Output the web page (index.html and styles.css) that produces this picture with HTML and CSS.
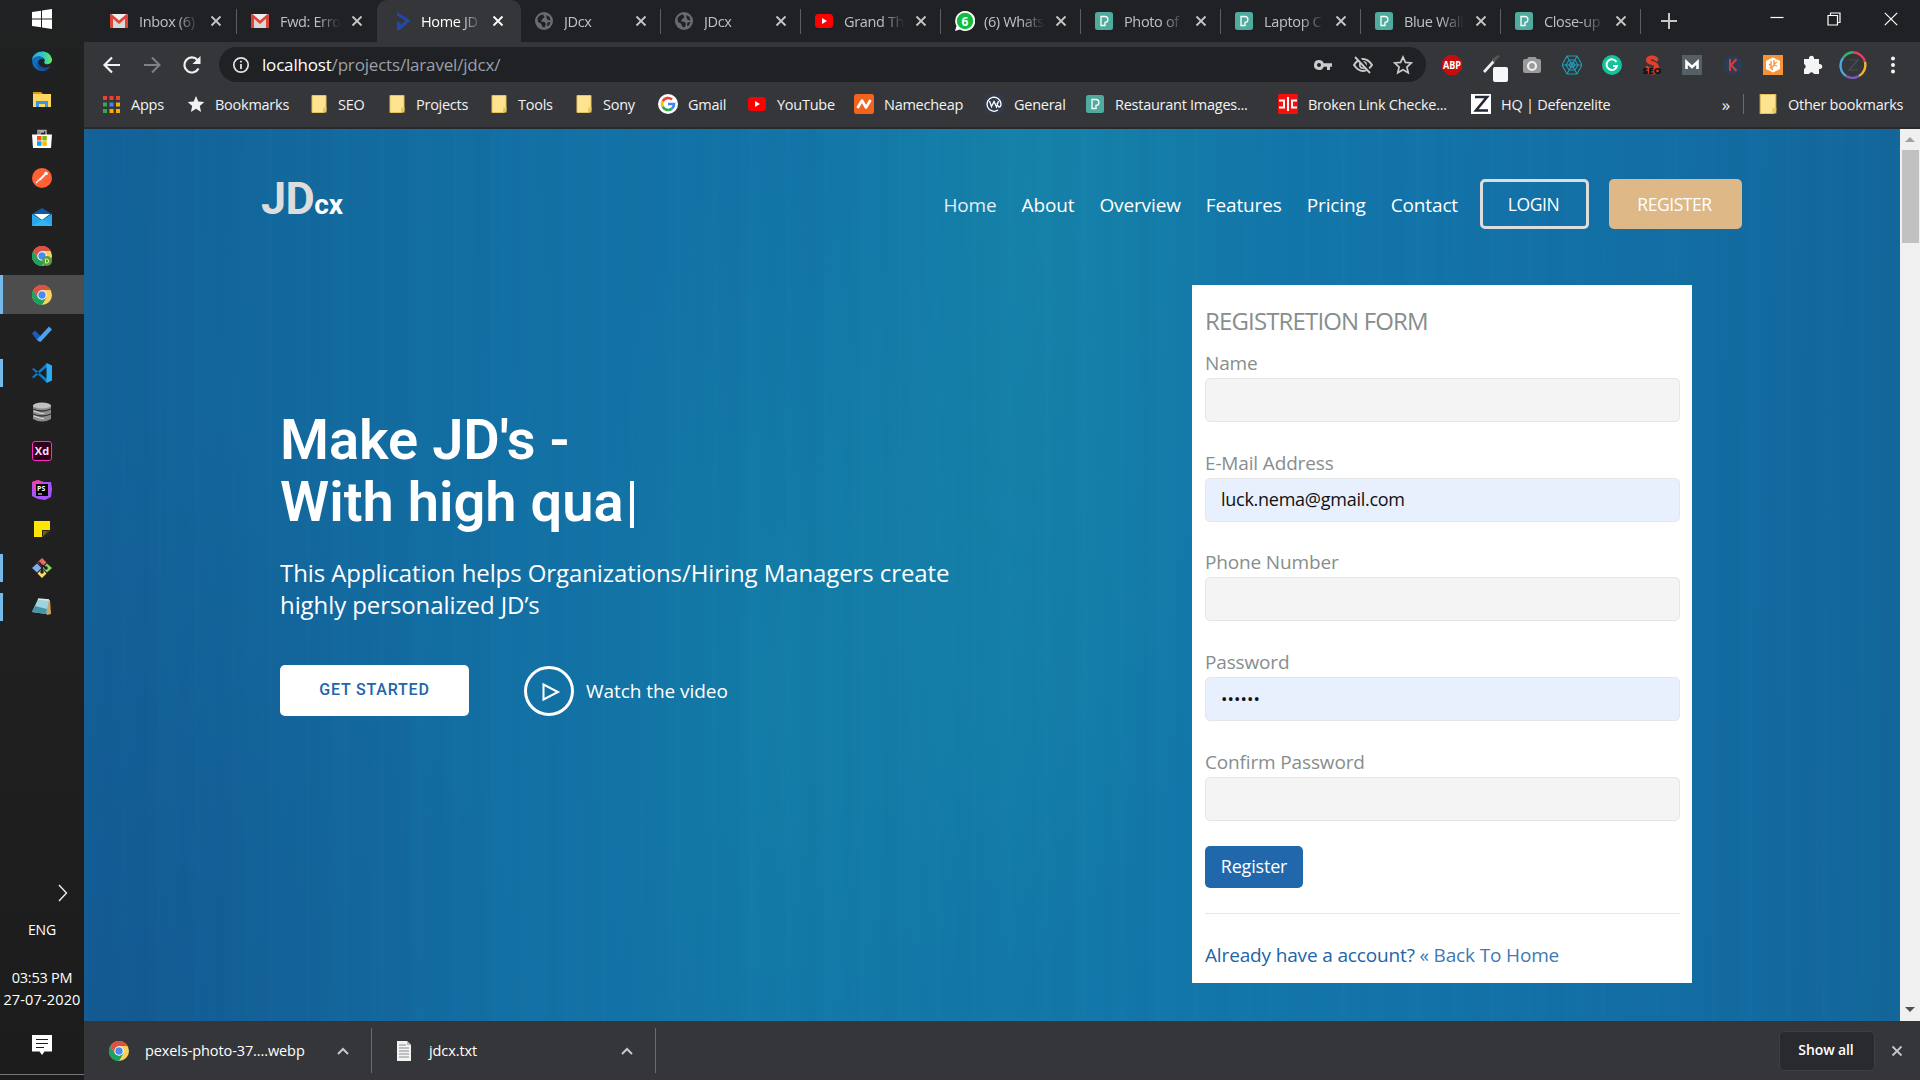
FILE: index.html
```html
<!DOCTYPE html>
<html lang="en">
<head>
<meta charset="utf-8">
<title>Home JDcx</title>
<link rel="stylesheet" href="styles.css">
</head>
<body>
<svg class="defs" aria-hidden="true">
  <symbol id="gmail" viewBox="0 0 18 18"><rect y="2" width="18" height="14" rx="1.5" fill="#eee"/><path d="M3 16V7l6 4 6-4v9z" fill="#d8d8d8"/><path d="M0 3.500Q0 2 1.500 2L9 8.500 16.500 2Q18 2 18 3.500V16h-3V6.800L9 12 3 6.800V16H0z" fill="#dc4437"/></symbol>
  <symbol id="globe" viewBox="0 0 18 18"><circle cx="9" cy="9" r="9" fill="#686b6f"/><path d="M2.500 6.500Q4 3 8 2.500L9.500 5 7 7.500l-1 2 3.500.5 1.500 2-1.500 3.500-2-.5-1.500-3.500-3-1.500zM11.500 3l3 2 1 3.500-2.500-.5-1.500-2zM12.500 10.500l3-.5-1.500 3.500-2 .500z" fill="#202124"/></symbol>
  <symbol id="yt" viewBox="0 0 18 18"><rect y="2" width="18" height="14" rx="3.500" fill="#f00"/><path d="M7 6l5 3-5 3z" fill="#fff"/></symbol>
  <symbol id="pexels" viewBox="0 0 18 18"><rect width="18" height="18" rx="2.500" fill="#4fab9d"/><path d="M6 4.500h4a2.900 2.900 0 0 1 0 5.800V13.500H6z" fill="none" stroke="#fff" stroke-width="1.300"/></symbol>
  <symbol id="cross" viewBox="0 0 12 12"><path d="M1.500 1.500l9 9M10.500 1.500l-9 9" stroke="currentColor" stroke-width="1.800"/></symbol>
  <symbol id="folder" viewBox="0 0 16 18"><path d="M1 .5h14v14l-2 3H1z" fill="#fee391" stroke="#e3c15c"/><path d="M12 17.500v-5h3.500v5z" fill="#ecc85b"/></symbol>
  <symbol id="caret" viewBox="0 0 12 8"><path d="M1 7l5-5 5 5" fill="none" stroke="#c6c8ca" stroke-width="2"/></symbol>
  <symbol id="chrome" viewBox="0 0 20 20"><circle cx="10" cy="10" r="10" fill="#fdd15c"/><path d="M1.300 5A10 10 0 0 1 18.700 5H10l-4.500 7.500z" fill="#de5246"/><path d="M1.300 5A10 10 0 0 0 10 20l4.400-7.500-4.400 2-4.300-2z" fill="#1aa260"/><circle cx="10" cy="10" r="4.700" fill="#fff"/><circle cx="10" cy="10" r="3.700" fill="#4a8af4"/></symbol>
</svg>

<div class="desktop">
  <aside class="taskbar">
    <div class="task start"><svg viewBox="0 0 20 20"><path d="M0 3l9-1.300v7.800H0zM10 1.500L20 0v9.500H10zM0 10.500h9v7.800L0 17zM10 10.500h10V20l-10-1.500z" fill="#fff"/></svg></div>
    <div class="task"><svg viewBox="0 0 20 20"><defs><linearGradient id="eg" x1="0" x2="1"><stop offset="0" stop-color="#2ba8e0"/><stop offset=".5" stop-color="#2cc3d3"/><stop offset="1" stop-color="#66eb56"/></linearGradient></defs><path d="M0 9C1-1 17-3 20 8c.5 4-3 6-6.500 5-3-1 0-2-1-4.500C10 4 3 5 0 9z" fill="url(#eg)"/><path d="M0 9c2-4 9-5 12-1-4-1-6 1-6 4 0 4 4 8 9 7-7 3-15-1-15-10z" fill="#0f6ec0"/><path d="M6.500 10c-1 5 5 9 12 5-2 4-7 6-10 4-4-2-5-6-2-9z" fill="#154f9b"/></svg></div>
    <div class="task"><svg viewBox="0 0 20 20"><path d="M1 2h8l2 2h-10z" fill="#dc9812"/><path d="M1 4h18v13H1z" fill="#ffd65f"/><path d="M4 17v-6h12v6h-3v-3H7v3z" fill="#3b96e0"/></svg></div>
    <div class="task"><svg viewBox="0 0 20 20"><path d="M6 6V1.500h8V6M8 6V3h4" fill="none" stroke="#aaa" stroke-width="1.500"/><path d="M0 5.500h20L19 19H1z" fill="#fff"/><path d="M5 7h4.500v4.500H5z" fill="#f25022"/><path d="M10.300 7h4.500v4.500h-4.500z" fill="#7fba00"/><path d="M5 12.300h4.500v4.500H5z" fill="#00a4ef"/><path d="M10.300 12.300h4.500v4.500h-4.500z" fill="#ffb900"/></svg></div>
    <div class="task"><svg viewBox="0 0 20 20"><circle cx="10" cy="10" r="10" fill="#ff6036"/><path d="M4 15l5-5 4-4M8 12l5-5" stroke="#fff" stroke-width="1.300"/><circle cx="14" cy="5.500" r="1.800" fill="#fff"/></svg></div>
    <div class="task"><svg viewBox="0 0 20 20"><path d="M0 7l10-6 10 6v5H0z" fill="#0c59a4"/><path d="M2 7h16l-8 6z" fill="#fff"/><path d="M0 7l10 6.500L20 7v12H0z" fill="#28a8ea"/><path d="M0 19l11-6.500 9 6.500z" fill="#35b4f2"/></svg></div>
    <div class="task"><svg viewBox="0 0 20 20"><use href="#chrome"/><circle cx="15" cy="15" r="5" fill="#5b9f3a"/><path d="M13.500 13v4h1.200a2 2 0 0 0 0-4z" fill="none" stroke="#d4eac8"/></svg></div>
    <div class="task active open"><svg viewBox="0 0 20 20"><use href="#chrome"/></svg></div>
    <div class="task"><svg viewBox="0 0 20 20"><path d="M0 9.500l3-3L8.500 12l-3 5z" fill="#185abd"/><path d="M5 15.500L17 2.500l3 3L9 17.500q-2 1-4-2z" fill="#4ba2ee"/></svg></div>
    <div class="task open"><svg viewBox="0 0 20 20"><path d="M0 6l1.500-1L15 16v4zM0 14l1.500 1.200L15 4V0z" fill="#0a7fd0"/><path d="M14.500 0L20 2.500v15L14.500 20z" fill="#2cabf0"/></svg></div>
    <div class="task"><svg viewBox="0 0 20 20"><path d="M1 3h18v14q-9 5-18 0z" fill="#8c8c8c"/><ellipse cx="10" cy="3.500" rx="9" ry="3" fill="#c0c0c0"/><path d="M1 7q9 4 18 0M1 12q9 4 18 0" fill="none" stroke="#333" stroke-width="1.300"/><path d="M2 9q7 3 10 2.500M2 14q7 3 10 2.500" fill="none" stroke="#ddd"/></svg></div>
    <div class="task"><span class="xd">Xd</span></div>
    <div class="task"><svg viewBox="0 0 20 20"><path d="M0 2l6-2 6 2 7 0 1 7-1 8-6 3-7-1-6-3z" fill="#a855f7"/><path d="M0 2l6-2 5 3-8 10z" fill="#f43fa8"/><path d="M4 4h12v12H4z" fill="#000"/><path d="M6 14h4" stroke="#fff"/><text x="5" y="10.500" class="ps">PS</text></svg></div>
    <div class="task"><svg viewBox="0 0 20 20"><path d="M2 2h16v16H2z" fill="#ffe500"/><path d="M10 18v-7h8z" fill="#242424"/><path d="M10 18h8v-7z" fill="#242424"/><path d="M11 12h5l-5 5z" fill="#6e6400"/></svg></div>
    <div class="task open"><svg viewBox="0 0 20 20"><path d="M10 0l4.500 4.500L10 9 5.500 4.500z" fill="#ef6868"/><path d="M5 5.500L9.500 10 5 14.500 0 10z" fill="#80aef0"/><path d="M15 5.500l5 4.500-5 4.500-4.500-4.500z" fill="#8bd65f"/><path d="M10 11l4.500 4.500L10 20l-4.500-4.500z" fill="#ffdc68"/><path d="M7 4l3 4v7M10 7l4 3" fill="none" stroke="#222" stroke-width="1.800"/><circle cx="10" cy="14" r="1.800" fill="#222"/><circle cx="14" cy="10" r="1.800" fill="#222"/></svg></div>
    <div class="task open"><svg viewBox="0 0 20 20"><path d="M6 2l12 1 1 14-4 1z" fill="#c9a66a"/><path d="M6 2l11 1-3 14-14-2z" fill="#9fd3df"/><path d="M0 15l3-6 12 3-1 5z" fill="#4696a8"/><path d="M6 2l11 1" stroke="#e8e8e8" stroke-width="1.500"/></svg></div>
    <div class="tray">
      <svg class="tray-chevron" viewBox="0 0 10 18"><path d="M1 1l7.500 8L1 17" fill="none" stroke="#eee" stroke-width="1.400"/></svg>
      <span class="lang">ENG</span>
      <span class="time">03:53 PM</span>
      <span class="date">27-07-2020</span>
      <svg class="action" viewBox="0 0 20 20"><path d="M0 0h20v16.500h-7.500L10 20l-2.500-3.500H0z" fill="#fff"/><path d="M4 4.500h12M4 8.500h12M4 12.500h8" stroke="#1d1d1d" stroke-width="1.200"/></svg>
    </div>
  </aside>

  <main class="browser">
    <div class="tabs">
      <div class="tab"><svg class="fav"><use href="#gmail"/></svg><span>Inbox (6)</span><svg class="x"><use href="#cross"/></svg></div>
      <div class="tab nosep"><svg class="fav"><use href="#gmail"/></svg><span>Fwd: Erro</span><svg class="x"><use href="#cross"/></svg></div>
      <div class="tab current"><svg class="fav" viewBox="0 0 18 18"><path d="M3 0l13.500 8.500L6 18H3V9l3.500 2v2l5-4.500L3 3.500z" fill="#2347ad"/></svg><span>Home JD</span><svg class="x"><use href="#cross"/></svg></div>
      <div class="tab"><svg class="fav"><use href="#globe"/></svg><span>JDcx</span><svg class="x"><use href="#cross"/></svg></div>
      <div class="tab"><svg class="fav"><use href="#globe"/></svg><span>JDcx</span><svg class="x"><use href="#cross"/></svg></div>
      <div class="tab"><svg class="fav"><use href="#yt"/></svg><span>Grand Th</span><svg class="x"><use href="#cross"/></svg></div>
      <div class="tab"><svg class="fav big" viewBox="0 0 20 20"><path d="M10 0a10 10 0 1 1-5 18.500L0 20l1.500-5A10 10 0 0 1 10 0z" fill="#fff"/><circle cx="10" cy="10" r="8.200" fill="#12bd3c"/><text x="6.600" y="14.500" class="wa">6</text></svg><span>(6) Whats</span><svg class="x"><use href="#cross"/></svg></div>
      <div class="tab"><svg class="fav"><use href="#pexels"/></svg><span>Photo of</span><svg class="x"><use href="#cross"/></svg></div>
      <div class="tab"><svg class="fav"><use href="#pexels"/></svg><span>Laptop C</span><svg class="x"><use href="#cross"/></svg></div>
      <div class="tab"><svg class="fav"><use href="#pexels"/></svg><span>Blue Wall</span><svg class="x"><use href="#cross"/></svg></div>
      <div class="tab"><svg class="fav"><use href="#pexels"/></svg><span>Close-up</span><svg class="x"><use href="#cross"/></svg></div>
      <svg class="plus" viewBox="0 0 16 16"><path d="M8 0v16M0 8h16" stroke="#c4c6c8" stroke-width="2"/></svg>
      <div class="window-controls">
        <svg viewBox="0 0 14 14"><path d="M.5 5.500h13" stroke="#fff" stroke-width="1.200"/></svg>
        <svg viewBox="0 0 14 14"><path d="M1 3.500h9.500V13H1zM3.500 3.500V1H13v9.500h-2.500" fill="none" stroke="#fff" stroke-width="1.200"/></svg>
        <svg viewBox="0 0 14 14"><path d="M.8.800l12.400 12.400M13.200.8L.8 13.200" stroke="#fff" stroke-width="1.200"/></svg>
      </div>
    </div>

    <div class="toolbar">
      <svg class="nav-icon" viewBox="0 0 20 20"><path d="M18 10H3M10 2.500L2.500 10l7.500 7.500" fill="none" stroke="#f1f1f1" stroke-width="2.200"/></svg>
      <svg class="nav-icon" viewBox="0 0 20 20"><path d="M2 10h15M10 2.500l7.500 7.500-7.500 7.500" fill="none" stroke="#808184" stroke-width="2"/></svg>
      <svg class="nav-icon" viewBox="0 0 20 20"><path d="M16.500 13.500A7.500 7.500 0 1 1 15.500 5" fill="none" stroke="#f1f1f1" stroke-width="2.200"/><path d="M18.500 1v8h-8z" fill="#f1f1f1"/></svg>
      <div class="omnibox">
        <svg class="info" viewBox="0 0 18 18"><circle cx="9" cy="9" r="7.200" fill="none" stroke="#e3e3e3" stroke-width="1.700"/><path d="M9 8v5M9 4.700v1.800" stroke="#e3e3e3" stroke-width="1.800"/></svg>
        <span class="url"><b>localhost</b>/projects/laravel/jdcx/</span>
        <div class="omni-icons">
          <svg viewBox="0 0 20 20"><path d="M6 5a5 5 0 1 0 4.700 6.700H14V15h3v-3.300h2V8.300h-8.300A5 5 0 0 0 6 5zm0 3a2 2 0 1 1 0 4 2 2 0 0 1 0-4z" fill="#c9cacb"/></svg>
          <svg viewBox="0 0 20 20"><path d="M1 10q4-6 9-6t9 6q-4 6-9 6t-9-6z" fill="none" stroke="#c9cacb" stroke-width="2"/><circle cx="10" cy="10" r="3.200" fill="none" stroke="#c9cacb" stroke-width="1.600"/><path d="M4 1l14 17" stroke="#202124" stroke-width="3"/><path d="M2 2l15 16" stroke="#c9cacb" stroke-width="1.900"/></svg>
          <svg viewBox="0 0 20 20"><path d="M10 2l2.400 5.400 5.900.6-4.400 4 1.300 5.800L10 14.800l-5.200 3L6.100 12 1.700 8l5.900-.6z" fill="none" stroke="#c9cacb" stroke-width="1.700"/></svg>
        </div>
      </div>
      <div class="extensions">
        <svg viewBox="0 0 20 20"><path d="M6 0h8l6 6v8l-6 6H6l-6-6V6z" fill="#c70d0d"/><text x="1" y="13.800" textLength="18" lengthAdjust="spacingAndGlyphs" class="abp">ABP</text></svg>
        <svg class="over" viewBox="0 0 20 20"><path d="M1 16L11 5l2 2L3 18z" fill="#eee"/><path d="M10 4l2 4 6-7-2-1z" fill="#555"/><rect x="11" y="12" width="15" height="15" rx="2" fill="#f6f7fb"/></svg>
        <svg viewBox="0 0 20 20"><path d="M1 6q0-2 2-2h2l1.500-2h7L15 4h2q2 0 2 2v10q0 2-2 2H3q-2 0-2-2z" fill="#9a9a9a"/><circle cx="10" cy="11" r="4" fill="none" stroke="#eee" stroke-width="2.200"/></svg>
        <svg viewBox="0 0 20 20"><path d="M5 1h10l5 9-5 9H5l-5-9zM7 5h6l3 5-3 5H7l-3-5zM8.500 7.500h3L13 10l-1.500 2.500h-3L7 10zM5 1l10 18M15 1L5 19M0 10h20" fill="none" stroke="#1f9bb3" stroke-width="1.100"/></svg>
        <svg viewBox="0 0 20 20"><circle cx="10" cy="10" r="10" fill="#15c39a"/><path d="M14.500 7A5.300 5.300 0 1 0 15 11h-4" fill="none" stroke="#fff" stroke-width="1.900"/></svg>
        <svg viewBox="0 0 20 20"><path d="M16.500 4Q14-.200 9 .500 3.500 1.500 4 5.500 4.500 9 10 10q2.500.5 2 2-1 1.500-4 .5l-4-2V17q6 4.500 11.500 1 3-3 1-8Q15 7 10.500 6q-2-.5-1.500-1.500 1.500-1 6 2.500z" fill="#e0402c"/><text x=".5" y="18.500" textLength="19" lengthAdjust="spacingAndGlyphs" class="seo">SEO</text></svg>
        <svg viewBox="0 0 20 20"><path d="M0 0h20v20H0z" fill="#556064"/><path d="M4.500 14V7l5.500 5 5.500-5v7" fill="none" stroke="#fff" stroke-width="2.600"/></svg>
        <svg viewBox="0 0 20 20"><circle cx="10" cy="10" r="10" fill="#2c3c52"/><path d="M7 4v12M13.500 4L8 10l5.500 6" fill="none" stroke="#cf3e42" stroke-width="2"/></svg>
        <svg viewBox="0 0 20 20"><path d="M0 0h20v20H0z" fill="#f79337"/><path d="M10 2.500l7 3.500v8l-7 3.500L3 14V6z" fill="#fff"/><path d="M8 6v5l-2-2M11 5v4l3-2M8 14l3-4 3 1M7 12l3 3" fill="none" stroke="#f79337" stroke-width="1.300"/></svg>
        <svg viewBox="0 0 20 20"><path d="M1 4h5a2.600 2.600 0 1 1 5 0h5v5a2.600 2.600 0 1 1 0 5v5h-5a2.700 2.700 0 0 0-5 0H1v-5a2.700 2.700 0 0 0 0-5z" fill="#f4f4f4"/></svg>
        <svg class="avatar" viewBox="0 0 28 28"><g fill="none" stroke-width="2.400"><path d="M4 7A13 13 0 0 1 14 1.300" stroke="#2fb573"/><path d="M14 1.300A12.700 12.700 0 0 1 26 11" stroke="#ef3b63"/><path d="M26 11a12.700 12.700 0 0 1-6 14" stroke="#f4b52d"/><path d="M20 25a12.700 12.700 0 0 1-13 0" stroke="#7b5db3"/><path d="M7 25A12.700 12.700 0 0 1 4 7" stroke="#49a8dd"/></g><path d="M10 9h9l-9 10h9" fill="none" stroke="#4b4d51" stroke-width="1.200"/></svg>
        <svg viewBox="0 0 20 20"><g fill="#f4f4f4"><circle cx="10" cy="3.500" r="2"/><circle cx="10" cy="10" r="2"/><circle cx="10" cy="16.500" r="2"/></g></svg>
      </div>
    </div>

    <nav class="bookmarks">
      <a><svg viewBox="0 0 18 18"><path d="M0 1h4v4H0zM6.500 1h4v4h-4zM13 1h4v4h-4z" fill="#e94235"/><path d="M0 7.500h4v4H0z" fill="#34a853"/><path d="M6.500 7.500h4v4h-4z" fill="#4285f4"/><path d="M13 7.500h4v4h-4zM6.500 14h4v4h-4zM13 14h4v4h-4z" fill="#fbab05"/><path d="M0 14h4v4H0z" fill="#34a853"/></svg>Apps</a>
      <a><svg viewBox="0 0 18 18"><path d="M9 1l2.300 5.500 6 .5-4.500 4 1.300 6L9 13.800 3.900 17l1.300-6L.7 7l6-.5z" fill="#f1f3f4"/></svg>Bookmarks</a>
      <a><svg><use href="#folder"/></svg>SEO</a>
      <a><svg><use href="#folder"/></svg>Projects</a>
      <a><svg><use href="#folder"/></svg>Tools</a>
      <a><svg><use href="#folder"/></svg>Sony</a>
      <a><svg viewBox="0 0 20 20"><circle cx="10" cy="10" r="10" fill="#fff"/><g fill="none" stroke-width="2.700"><path d="M14 5.500A6 6 0 0 0 4.700 7.300" stroke="#ea4335"/><path d="M4.700 7.300a6 6 0 0 0 0 5.400" stroke="#fbbc05"/><path d="M4.700 12.700A6 6 0 0 0 14 14.500" stroke="#34a853"/><path d="M14 14.500A6 6 0 0 0 16 10h-6" stroke="#4285f4"/></g></svg>Gmail</a>
      <a><svg><use href="#yt"/></svg>YouTube</a>
      <a><svg viewBox="0 0 20 20"><rect width="20" height="20" rx="2.500" fill="#f0641e"/><path d="M3.500 14L8 6.500l4 7L16.500 6" fill="none" stroke="#fff" stroke-width="2.600" stroke-linejoin="round"/></svg>Namecheap</a>
      <a><svg viewBox="0 0 20 20"><rect width="20" height="20" rx="4" fill="#303a4b"/><path d="M14 16a7 7 0 1 1 3-6q0 3-2 3-1 0-2-4M5.500 7l2 5.500 2.500-5 2.500 5.500L14.500 7" fill="none" stroke="#fff" stroke-width="1.300"/></svg>General</a>
      <a><svg><use href="#pexels"/></svg>Restaurant Images...</a>
      <a><svg viewBox="0 0 20 20"><rect width="20" height="20" rx="1.500" fill="#f60d0d"/><path d="M1 6.500h5v7H1M10 3v14M19 6.500h-5v7h5" fill="none" stroke="#fff" stroke-width="2"/></svg>Broken Link Checke...</a>
      <a><svg viewBox="0 0 20 20"><path d="M0 0h20v20H0z" fill="#fff"/><path d="M4 3h12L5 16.500h12" fill="none" stroke="#222831" stroke-width="2.600"/></svg>HQ | Defenzelite</a>
      <span class="more">»</span>
      <a class="other"><svg><use href="#folder"/></svg>Other bookmarks</a>
    </nav>

    <div class="viewport">
      <div class="page">
        <header class="site-header">
          <div class="logo">JD<small>cx</small></div>
          <nav class="site-nav">
            <a class="on">Home</a><a>About</a><a>Overview</a><a>Features</a><a>Pricing</a><a>Contact</a>
            <a class="btn login">LOGIN</a><a class="btn register">REGISTER</a>
          </nav>
        </header>
        <div class="hero">
          <section class="pitch">
            <h1>Make JD's -<br><span>With high qua</span><i class="cursor"></i></h1>
            <p>This Application helps Organizations/Hiring Managers create<br>highly personalized JD’s</p>
            <div class="actions">
              <a class="get-started">GET STARTED</a>
              <a class="watch"><svg viewBox="0 0 50 50"><circle cx="25" cy="25" r="23.500" fill="none" stroke="#fff" stroke-width="3"/><path d="M19.500 18.500L34 26l-14.500 7.500z" fill="none" stroke="#fff" stroke-width="2"/></svg><span>Watch the video</span></a>
            </div>
          </section>
          <form class="card">
            <h2>REGISTRETION FORM</h2>
            <label><span>Name</span><i class="field"></i></label>
            <label><span>E-Mail Address</span><i class="field filled"><b>luck.nema@gmail.com</b></i></label>
            <label><span>Phone Number</span><i class="field"></i></label>
            <label><span>Password</span><i class="field filled"><b class="dots">••••••</b></i></label>
            <label><span>Confirm Password</span><i class="field"></i></label>
            <a class="submit">Register</a>
            <hr>
            <p class="links"><b>Already have a account?</b> « Back To Home</p>
          </form>
        </div>
      </div>
      <div class="scrollbar">
        <svg viewBox="0 0 20 20"><path d="M5 13l5-5 5 5z" fill="#a0a0a0"/></svg>
        <div class="thumb"></div>
        <svg class="down" viewBox="0 0 20 20"><path d="M5 6l5 5 5-5z" fill="#505050"/></svg>
      </div>
    </div>

    <footer class="downloads">
      <div class="download"><svg class="file"><use href="#chrome"/></svg><span>pexels-photo-37....webp</span><svg class="caret"><use href="#caret"/></svg></div>
      <div class="download"><svg class="file" viewBox="0 0 20 20"><path d="M3 0h10l4 4v16H3z" fill="#f3f3f3"/><path d="M5 4h7M5 7h10M5 10h10M5 13h10M5 16h10" stroke="#8b8b8b"/><path d="M13 0v4h4" fill="#bbb"/></svg><span>jdcx.txt</span><svg class="caret"><use href="#caret"/></svg></div>
      <span class="show-all">Show all</span>
      <svg class="x"><use href="#cross"/></svg>
    </footer>
  </main>
</div>
</body>
</html>
```
FILE: styles.css
```css
* { box-sizing: border-box; }
body { margin: 0; overflow: hidden; font-family: "Open Sans", "Noto Sans", sans-serif; }
a { text-decoration: none; }
.defs { display: none; }
svg { flex: none; display: block; }
.desktop { display: flex; width: 1920px; height: 1080px; }

/* Taskbar */
.taskbar { display: flex; flex-direction: column; width: 84px; height: 1080px; background: linear-gradient(#202122, #202020 60%, #1c1c1c); color: #fff; }
.task { display: flex; flex: none; align-items: center; justify-content: center; height: 39px; }
.task svg { width: 20px; height: 20px; }
.task.start { height: 38px; margin-bottom: 3px; }
.task.active { background: #4d4d4d; }
.task.open { background-image: linear-gradient(#76b9ed, #76b9ed); background-repeat: no-repeat; background-size: 3px 28px; background-position: 0 center; }
.task.active.open { background-size: 3px 100%; }
.xd { width: 20px; height: 20px; border: 1.500px solid #ff2bc2; border-radius: 3px; background: #2e001e; color: #ffd9f4; font: 700 11px/17px "Open Sans", sans-serif; text-align: center; }
.ps { font: 700 7px "Open Sans", sans-serif; fill: #fff; }
.tray { display: flex; flex: 1; flex-direction: column; align-items: center; margin-bottom: 5px; border-bottom: 1.500px solid #777; font-size: 14px; line-height: 22px; white-space: nowrap; }
.tray-chevron { width: 10px; height: 18px; margin: auto 16px 17px auto; }
.lang { margin-bottom: 26px; letter-spacing: -.1px; }
.time { font-size: 14.500px; letter-spacing: -.25px; }
.date { font-size: 14.500px; letter-spacing: .15px; }
.action { width: 20px; height: 20px; margin: 24px 0 19px; }

/* Browser frame */
.browser { display: flex; flex: 1; flex-direction: column; min-width: 0; }
.tabs { display: flex; flex: none; height: 42px; padding-left: 12px; background: #202124; color: #bdc1c6; }
.tab { position: relative; display: flex; flex: none; align-items: center; width: 140px; padding: 0 14px; font-size: 14.500px; letter-spacing: -.35px; }
.tab:first-child { width: 141px; }
.tab::after { content: ""; position: absolute; right: 0; top: 9px; width: 1px; height: 25px; background: #5c5e62; }
.tab.nosep::after, .tab.current::after { display: none; }
.fav { width: 18px; height: 18px; margin-right: 11px; }
.fav.big { width: 20px; height: 20px; margin-right: 9px; }
.wa { font: 700 12px "Open Sans", sans-serif; fill: #fff; }
.tab span { width: 62px; white-space: nowrap; -webkit-mask-image: linear-gradient(90deg, #000 60%, transparent 98%); mask-image: linear-gradient(90deg, #000 60%, transparent 98%); }
.x { width: 12px; height: 12px; color: #c4c6c8; }
.tab .x { margin-left: 9px; }
.tab.current { width: 144px; padding-left: 17px; border-radius: 10px 10px 0 0; background: #35363a; color: #fff; }
.tab.current .fav { margin-right: 9px; }
.tab.current .x { color: #fff; }
.plus { width: 16px; height: 16px; margin: 13px 0 0 20px; }
.window-controls { display: flex; gap: 43px; margin: 12px 22px 0 auto; }
.window-controls svg { width: 14px; height: 14px; }

.toolbar { display: flex; flex: none; align-items: center; height: 45px; padding-left: 18px; background: #35363a; }
.nav-icon { width: 20px; height: 20px; margin-right: 20px; }
.omnibox { display: flex; flex: none; align-items: center; width: 1207px; height: 35px; margin-left: -3px; padding: 0 13px; border-radius: 18px; background: #202124; }
.info { width: 18px; height: 18px; margin-right: 12px; }
.url { color: #9aa0a6; font-size: 17px; letter-spacing: -.18px; }
.url b { color: #fff; font-weight: 400; }
.omni-icons { display: flex; gap: 20px; margin-left: auto; }
.omni-icons svg, .extensions svg { width: 20px; height: 20px; }
.extensions { display: flex; align-items: center; justify-content: space-between; width: 461px; margin-left: 16px; }
.extensions .over { overflow: visible; }
.extensions .avatar { width: 28px; height: 28px; margin: 0 -4px; }
.abp { font: 700 10.500px "Open Sans", sans-serif; fill: #fff; }
.seo { font: 800 9px "Open Sans", sans-serif; fill: #111; }

.bookmarks { display: flex; flex: none; align-items: center; height: 42px; padding: 0 0 6px 19px; border-bottom: 2px solid #28292c; background: #35363a; color: #f1f3f4; font-size: 14.500px; letter-spacing: -.26px; white-space: nowrap; }
.bookmarks a { display: flex; flex: none; align-items: center; }
.bookmarks svg { width: 18px; height: 18px; margin-right: 10px; }
.bookmarks a:nth-child(1) { width: 84px; }
.bookmarks a:nth-child(2) { width: 123px; }
.bookmarks a:nth-child(3) { width: 78px; }
.bookmarks a:nth-child(4) { width: 102px; }
.bookmarks a:nth-child(5) { width: 85px; }
.bookmarks a:nth-child(6) { width: 83px; }
.bookmarks a:nth-child(7) { width: 90px; }
.bookmarks a:nth-child(8) { width: 106px; }
.bookmarks a:nth-child(9) { width: 130px; }
.bookmarks a:nth-child(10) { width: 102px; }
.bookmarks a:nth-child(11) { width: 192px; }
.bookmarks a:nth-child(12) { width: 193px; }
.bookmarks a:nth-child(n+7) svg { width: 20px; height: 20px; }
.bookmarks a:nth-child(8) svg, .bookmarks a:nth-child(11) svg { width: 18px; height: 18px; margin-right: 11px; }
.bookmarks .more { margin-left: auto; margin-right: 13px; font-size: 17px; }
.bookmarks .other { width: 177px; height: 20px; padding-left: 14px; border-left: 1px solid #6a6b6e; }
.bookmarks .other svg { width: 18px; height: 18px; }

/* Page */
.viewport { display: flex; flex: none; height: 892px; }
.page {
  flex: 1;
  background:
    repeating-linear-gradient(90deg, rgba(255,255,255,.009) 0 2px, transparent 6px 19px, rgba(0,20,60,.012) 23px 25px, transparent 31px 37px),
    repeating-linear-gradient(90.300deg, rgba(60,160,190,.014) 0 9px, transparent 22px 49px, rgba(0,20,80,.012) 62px 66px, transparent 83px),
    radial-gradient(ellipse 240px 760px at 950px 60px, rgba(24,140,168,.55), transparent),
    radial-gradient(ellipse 200px 560px at 700px 560px, rgba(20,135,165,.42), transparent),
    radial-gradient(ellipse 240px 420px at 900px 560px, rgba(20,135,165,.3), transparent),
    radial-gradient(ellipse 420px 620px at 20px 892px, rgba(20,80,140,.5), transparent),
    linear-gradient(92deg, #126198 0, #12699e 12%, #1271a5 26%, #1275a8 40%, #1277a9 56%, #1276aa 66%, #1271a7 80%, #126ba1 91%, #12669a 100%);
}
.site-header { display: flex; align-items: flex-start; justify-content: space-between; padding: 50px 158px 0 177px; }
.logo { color: #ddd; font: 700 45px/39px Roboto, sans-serif; letter-spacing: -.6px; white-space: nowrap; }
.logo small { color: #fff; font-size: 28px; letter-spacing: 0; }
.site-nav { display: flex; align-items: center; height: 50px; color: #fff; font-size: 19px; font-weight: 500; letter-spacing: -.13px; }
.site-nav a { margin-right: 25px; padding-top: 1px; }
.site-nav .on { color: #e2eef4; }
.site-nav .btn { display: flex; align-items: center; justify-content: center; height: 50px; padding: 0 2px 0 0; border-radius: 5px; font-size: 17.500px; letter-spacing: -.45px; }
.site-nav .login { width: 109px; margin-right: 20px; margin-left: -3px; border: 3px solid #ddd; }
.site-nav .register { width: 133px; margin: 0; background: #deb887; }
.hero { display: flex; align-items: flex-start; justify-content: space-between; padding: 56px 208px 0 196px; color: #fff; }
.pitch { padding-top: 124px; }
h1 { margin: 0; font: 600 56px/62px Roboto, sans-serif; white-space: nowrap; }
.cursor { display: inline-block; width: 4px; height: 47px; margin-left: 6px; background: #fff; vertical-align: -7px; }
.pitch p { margin: 24px 0 44px; font-size: 24px; line-height: 32px; letter-spacing: -.09px; white-space: nowrap; }
.actions { display: flex; align-items: center; }
.get-started { display: flex; align-items: center; justify-content: center; width: 189px; height: 51px; padding-bottom: 2px; border-radius: 5px; background: #fff; color: #2065ab; font: 500 16px Roboto, sans-serif; letter-spacing: .8px; }
.watch { display: flex; align-items: center; gap: 12px; margin-left: 55px; font-size: 19px; letter-spacing: -.05px; }
.watch svg { width: 50px; height: 50px; }
.card { width: 500px; height: 698px; padding: 18px 12px 0 13px; background: #fff; color: #868e8e; font-size: 19px; letter-spacing: -.15px; }
h2 { margin: 0 0 1px; font-size: 24px; font-weight: 400; line-height: 35px; letter-spacing: -.85px; white-space: nowrap; }
.card label { display: flex; flex-direction: column; height: 99.700px; }
.card label span { height: 39px; padding-top: 11px; line-height: 26px; }
.field { display: flex; align-items: center; height: 44px; padding: 0 15px 2px; border: 1px solid #e4e6e8; border-radius: 5px; background: #f4f4f4; color: #111; font-style: normal; }
.field.filled { background: #e8effd; }
.field b { font-size: 18px; font-weight: 400; letter-spacing: -.26px; }
.field .dots { font-size: 17px; letter-spacing: .1px; }
.submit { display: flex; align-items: center; justify-content: center; width: 98px; height: 42px; margin-top: 8.500px; padding-bottom: 2px; border-radius: 5px; background: #2068ab; color: #fff; font-size: 18px; letter-spacing: -.2px; }
.card hr { height: 1px; margin: 25px 0 0; border: 0; background: #e7e7e7; }
.links { margin: 27px 0 0; color: #3d7ab8; line-height: 28px; white-space: nowrap; }
.links b { color: #2164a8; font-weight: 400; }
.scrollbar { width: 20px; background: #f0f0f0; display: flex; flex-direction: column; align-items: center; }
.scrollbar svg { width: 20px; height: 20px; }
.thumb { width: 17px; height: 93px; margin-top: 1px; background: #c1c1c1; }
.scrollbar .down { margin-top: auto; }

/* Downloads */
.downloads { display: flex; flex: none; align-items: center; height: 59px; background: #35363a; color: #fff; font-size: 14.500px; letter-spacing: -.1px; }
.download { display: flex; align-items: center; width: 284px; height: 45px; padding: 0 22px; border-right: 1px solid #6a6b6e; }
.download:first-child { width: 288px; padding-left: 25px; }
.file { width: 20px; height: 20px; margin-right: 16px; }
.download + .download .file { margin-right: 15px; }
.caret { width: 12px; height: 8px; margin-left: auto; }
.show-all { display: flex; align-items: center; justify-content: center; width: 96px; height: 40px; margin-left: auto; padding: 0 2px 2px 0; border: 1px solid #3e3f43; border-radius: 5px; background: #292a2d; font-size: 14px; font-weight: 600; }
.downloads > .x { margin: 0 17px 0 16px; }
```
